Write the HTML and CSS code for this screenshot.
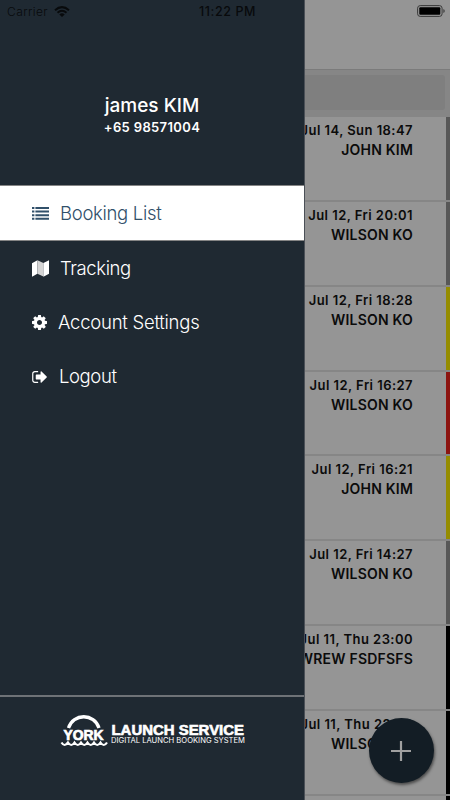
FILE: index.html
```html
<!DOCTYPE html>
<html lang="en">
<head>
<meta charset="utf-8">
<title>Booking List</title>
<link rel="stylesheet" href="styles.css">
</head>
<body>
<div class="app">
  <aside class="drawer">
    <header class="profile">
      <div class="name">james KIM</div>
      <div class="phone">+65 98571004</div>
    </header>
    <nav class="menu">
      <a class="item active">
        <svg class="list-icon" viewBox="0 0 17 13"><path d="M0 0h2.400v2H0zM3.400 0H17v2H3.400zM0 3.600h2.400v2H0zM3.400 3.600H17v2H3.400zM0 7.200h2.400v2H0zM3.400 7.200H17v2H3.400zM0 10.800h2.400v2H0zM3.400 10.800H17v2H3.400z"/></svg>
        <span class="label booking">Booking List</span>
      </a>
      <a class="item">
        <svg class="map-icon" viewBox="0 0 17 17"><path d="M0 3.200 5.400.3v13.500L0 16.800z"/><path class="fold" d="M5.400.3 11.400 3.100v13.500l-6-2.800z"/><path d="M11.400 3.100 17 .2v13.600l-5.600 2.900z"/></svg>
        <span class="label tracking">Tracking</span>
      </a>
      <a class="item">
        <svg class="cog-icon" viewBox="128 128 1536 1536"><path d="M1152 896q0-106-75-181t-181-75-181 75-75 181 75 181 181 75 181-75 75-181zm512-109v222q0 12-8 23t-20 13l-185 28q-19 54-39 91 35 50 107 138 10 12 10 25t-9 23q-27 37-99 108t-94 71q-12 0-26-9l-138-108q-44 23-91 38-16 136-29 186-7 28-36 28h-222q-14 0-24.500-8.500t-11.500-21.500l-28-184q-49-16-90-37l-141 107q-10 9-25 9-14 0-25-11-126-114-165-168-7-10-7-23 0-12 8-23 15-21 51-66.500t54-70.500q-27-50-41-99l-183-27q-13-2-21-12.500t-8-23.500v-222q0-12 8-23t19-13l186-28q14-46 39-92-40-57-107-138-10-12-10-24 0-10 9-23 26-36 98.500-107.500t94.500-71.500q13 0 26 10l138 107q44-23 91-38 16-136 29-186 7-28 36-28h222q14 0 24.500 8.500t11.500 21.500l28 184q49 16 90 37l142-107q9-9 24-9 13 0 25 10 129 119 165 170 7 8 7 22 0 12-8 23-15 21-51 66.500t-54 70.500q26 50 41 98l183 28q13 2 21 12.500t8 23.500z"/></svg>
        <span class="label account">Account Settings</span>
      </a>
      <a class="item">
        <svg class="out-icon" viewBox="64 256 1568 1280"><path d="M704 1440q0 4 1 20t.5 26.500-3 23.500-10 19.500-20.500 6.500h-320q-119 0-203.500-84.500t-84.500-203.500v-704q0-119 84.500-203.500t203.500-84.500h320q13 0 22.500 9.500t9.500 22.500q0 4 1 20t.5 26.500-3 23.500-10 19.500-20.500 6.500h-320q-66 0-113 47t-47 113v704q0 66 47 113t113 47h312l11.500 1 11.500 3 8 5.500 7 9 2 13.500zm928-544q0 26-19 45l-544 544q-19 19-45 19t-45-19-19-45v-288h-448q-26 0-45-19t-19-45v-384q0-26 19-45t45-19h448v-288q0-26 19-45t45-19 45 19l544 544q19 19 19 45z"/></svg>
        <span class="label logout">Logout</span>
      </a>
    </nav>
    <footer class="brand">
      <svg class="logo" viewBox="0 0 188 36">
        <path class="arc" d="M8.500 12C13-3 34.500-3 39 12"/>
        <path class="wave" d="M1.500 26.500q3 5 6.500 0 3.300 5 6.500 0 3.300 5 6.500 0 3.300 5 6.500 0 3.300 5 6.500 0 3.300 5 6.500 0 3.300 5 6.500 0"/>
        <text class="york" x="3.500" y="23.700" textLength="40" lengthAdjust="spacingAndGlyphs">YORK</text>
        <text class="launch" x="51.500" y="18.500" textLength="132.500" lengthAdjust="spacingAndGlyphs">LAUNCH SERVICE</text>
        <text class="digital" x="51" y="27.400" textLength="134" lengthAdjust="spacingAndGlyphs">DIGITAL LAUNCH BOOKING SYSTEM</text>
      </svg>
    </footer>
  </aside>

  <main class="page">
    <div class="navbar"></div>
    <div class="search"><div class="field"></div></div>
    <div class="row gray"><div class="date">Jul 14, Sun 18:47</div><div class="who">JOHN KIM</div></div>
    <div class="row gray"><div class="date">Jul 12, Fri 20:01</div><div class="who">WILSON KO</div></div>
    <div class="row yellow"><div class="date">Jul 12, Fri 18:28</div><div class="who">WILSON KO</div></div>
    <div class="row red"><div class="date">Jul 12, Fri 16:27</div><div class="who">WILSON KO</div></div>
    <div class="row yellow"><div class="date">Jul 12, Fri 16:21</div><div class="who">JOHN KIM</div></div>
    <div class="row gray"><div class="date">Jul 12, Fri 14:27</div><div class="who">WILSON KO</div></div>
    <div class="row black"><div class="date">Jul 11, Thu 23:00</div><div class="who">WREW FSDFSFS</div></div>
    <div class="row black"><div class="date">Jul 11, Thu 22:58</div><div class="who">WILSON KO</div></div>
    <div class="row black"></div>
  </main>

  <div class="status">
    <span class="carrier">Carrier</span>
    <svg class="wifi" viewBox="0 0 16 11"><path d="M1 4.200Q8-2 15 4.200M3.500 6.700Q8 2.800 12.500 6.700"/><path class="dot" d="M5.300 8.500Q8 6.200 10.700 8.500L8 11z"/></svg>
    <span class="time">11:22 PM</span>
    <svg class="battery" viewBox="0 0 28 12"><rect class="case" x=".6" y=".6" width="24.500" height="10.800" rx="2.600"/><rect x="2.300" y="2.200" width="21" height="7.600" rx="1"/><path class="cap" d="M26.300 4q1.500.5 1.500 2t-1.500 2z"/></svg>
  </div>

  <button class="fab" aria-label="Add"><svg viewBox="0 0 20 20"><path d="M10 0v20M0 10h20"/></svg></button>
</div>
</body>
</html>
```
FILE: styles.css
```css
* { box-sizing: border-box; }
body {
  margin: 0;
  font-family: Inter, "Liberation Sans", sans-serif;
}
.app {
  position: relative;
  display: flex;
  width: 450px;
  height: 800px;
  overflow: hidden;
  background: #868686;
}

/* Drawer */
.drawer {
  position: relative;
  z-index: 1;
  display: flex;
  flex-direction: column;
  flex: none;
  width: 304px;
  height: 800px;
  background: #1f2932;
  color: #fff;
  box-shadow: 1px 0 0 #4b5057;
}
.profile {
  height: 185px;
  padding-top: 94px;
  text-align: center;
}
.name {
  font-size: 19px;
  line-height: 23px;
  font-weight: 500;
}
.phone {
  font-size: 13px;
  line-height: 20px;
  font-weight: 600;
  letter-spacing: .35px;
}
.menu { flex: 1; }
.item {
  display: flex;
  align-items: center;
  height: 54.400px;
  padding-left: 32px;
}
.item svg { fill: #fff; }
.item.active {
  height: 56px;
  background: #fff;
  color: #31506a;
  border-top: 1px solid #858585;
  border-bottom: 1px solid #858585;
}
.item.active svg { fill: #31506a; }
.label {
  padding-bottom: 1px;
  font-size: 18.500px;
  line-height: 24px;
  font-weight: 300;
  letter-spacing: -.25px;
}
.item.active .label { letter-spacing: -.3px; }
.label.tracking, .label.logout { letter-spacing: -.4px; }
.list-icon { width: 17px; height: 13px; margin-right: 11px; }
.map-icon { width: 17px; height: 17px; margin-right: 11px; }
.item .fold { fill: #d4d4d4; }
.cog-icon { width: 15px; height: 15px; margin-right: 11px; }
.out-icon { width: 15px; height: 12px; margin-right: 12px; }

.brand {
  height: 105px;
  padding: 19px 0 0 60px;
  border-top: 2px solid #6e7277;
}
.logo {
  display: block;
  width: 188px;
  height: 36px;
  fill: #fff;
  overflow: visible;
}
.arc, .wave { fill: none; stroke: #fff; }
.arc { stroke-width: 3.300; }
.wave { stroke-width: 2.200; }
.york {
  font: 700 14px "Liberation Sans", sans-serif;
  stroke: #fff;
  stroke-width: .7px;
}
.launch {
  font: 700 14px "Liberation Sans", sans-serif;
  stroke: #fff;
  stroke-width: .6px;
}
.digital { font: 400 7.400px Inter, sans-serif; }

/* Bookings */
.page { flex: 1; min-width: 0; }
.navbar {
  height: 70px;
  background: #959595;
  border-bottom: 1px solid #7b7b7b;
}
.search { height: 47.300px; padding: 5px 5px 0 0; }
.field {
  height: 35px;
  background: #7f7f7f;
  border-radius: 0 3px 3px 0;
}
.row {
  display: flex;
  flex-direction: column;
  align-items: flex-end;
  height: 82.800px;
  margin-bottom: 2px;
  padding: 4px 33px 0 0;
  background: #959595;
  border-right: 4px solid #575757;
  color: #0b0b0b;
  white-space: nowrap;
}
.row.yellow { border-right-color: #958c00; }
.row.red { border-right-color: #8c1410; }
.row.black { border-right-color: #000; }
.date {
  font-size: 13px;
  line-height: 19px;
  font-weight: 600;
  letter-spacing: .45px;
}
.who {
  font-size: 14px;
  line-height: 20px;
  font-weight: 600;
  letter-spacing: .2px;
}

/* Overlays */
.status {
  position: absolute;
  z-index: 2;
  inset: 0 0 auto;
  display: flex;
  align-items: center;
  height: 22px;
  padding: 0 5px 0 7px;
  color: #080a0c;
}
.carrier { font-size: 12px; font-weight: 300; letter-spacing: .4px; }
.wifi { width: 16px; height: 11px; margin-left: 6px; fill: none; stroke: #080a0c; stroke-width: 2; }
.wifi .dot { fill: #080a0c; stroke: none; }
.time { position: absolute; left: 199px; font-size: 12.500px; font-weight: 500; letter-spacing: .6px; }
.battery { width: 28px; height: 12px; margin-left: auto; }
.battery .case { fill: none; stroke: #393939; }
.battery .cap { fill: #424242; }
.fab {
  position: absolute;
  z-index: 2;
  left: 368.500px;
  top: 718px;
  display: grid;
  place-items: center;
  width: 65px;
  height: 65px;
  padding: 0;
  border: 0;
  border-radius: 50%;
  background: #131d25;
  box-shadow: 1px 2px 3px rgba(0, 0, 0, .5);
}
.fab svg { width: 20px; height: 20px; stroke: #a0a0a0; stroke-width: 2.200; }
```
